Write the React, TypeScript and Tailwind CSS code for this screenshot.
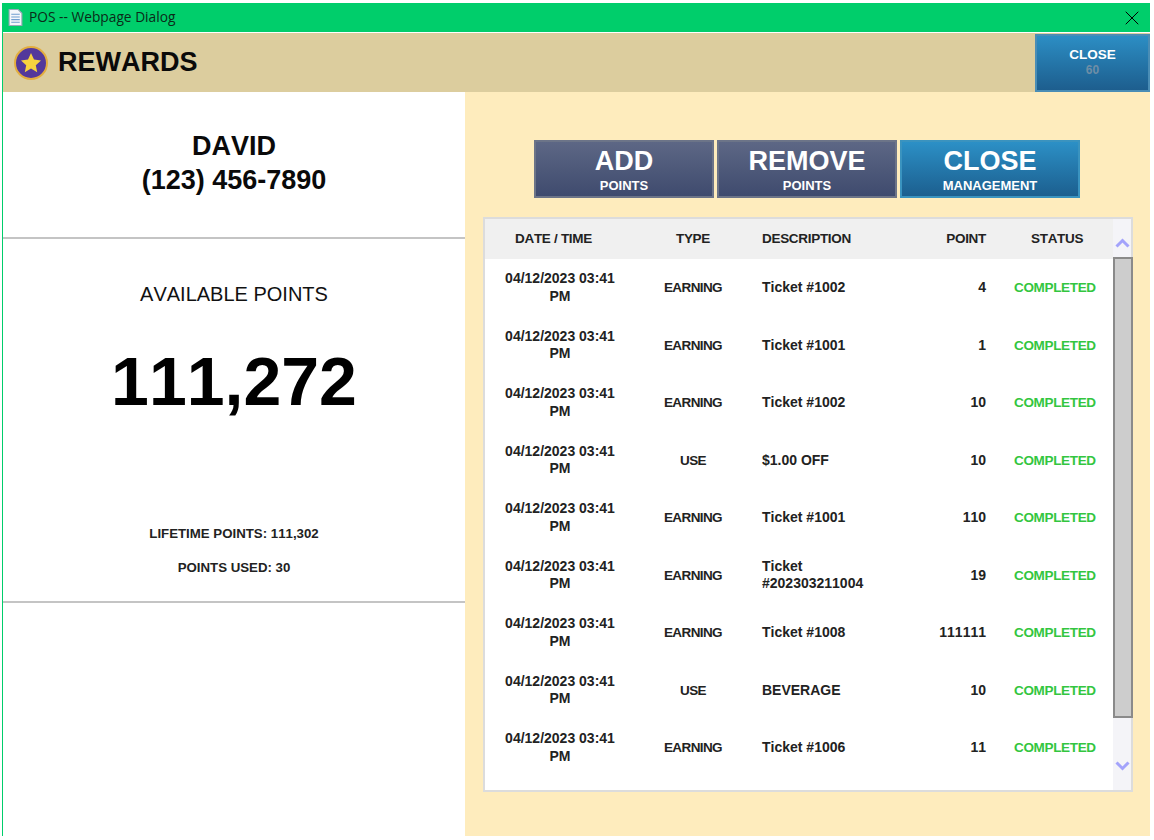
import React from 'react';
import { X } from 'lucide-react';

const rows = [
  { type: 'EARNING', desc: 'Ticket #1002', point: '4' },
  { type: 'EARNING', desc: 'Ticket #1001', point: '1' },
  { type: 'EARNING', desc: 'Ticket #1002', point: '10' },
  { type: 'USE', desc: '$1.00 OFF', point: '10' },
  { type: 'EARNING', desc: 'Ticket #1001', point: '110' },
  { type: 'EARNING', desc: 'Ticket #202303211004', point: '19' },
  { type: 'EARNING', desc: 'Ticket #1008', point: '111111' },
  { type: 'USE', desc: 'BEVERAGE', point: '10' },
  { type: 'EARNING', desc: 'Ticket #1006', point: '11' },
];

const slate = 'bg-gradient-to-b from-[#5d6785] to-[#3f4b6e] border-[#6c7488]';
const blue = 'bg-gradient-to-b from-[#2c90c6] to-[#1c5f8f] border-[#3a93bf]';

const ActionButton = ({ big, small, tone }: { big: string; small: string; tone: string }) => (
  <button className={`w-[180px] h-[58px] border-2 flex flex-col items-center text-white font-bold pt-[3px] ${tone}`}>
    <span className="text-[27px] leading-[32px]">{big}</span>
    <span className="text-[13px] leading-[17px]">{small}</span>
  </button>
);

export default function App() {
  return (
    <div className="w-[1154px] h-[840px] bg-white overflow-hidden pt-[3px] font-['Liberation_Sans',Arial,sans-serif] [font-kerning:none]">
      <div className="w-[1148px] ml-[2px] h-[833px] border-l border-[#00ce6b] flex flex-col">
        {/* title bar */}
        <div className="h-[29px] bg-[#00ce6b] flex items-center pl-[6px] pr-[6px] text-[13.75px] text-[#0b2a18] font-['Open_Sans',sans-serif] -ml-px shrink-0">
          <svg width="15" height="17" viewBox="0 0 14 16" className="mr-[6px]">
            <path d="M1 .5h8.5L13 4v11.5H1z" fill="#f4f7fb" stroke="#9aa8b8" />
            <path d="M3 5h8M3 7.5h8M3 10h8M3 12.5h8" stroke="#6f9fd0" />
          </svg>
          <span>POS -- Webpage Dialog</span>
          <X size={24} strokeWidth={1} className="ml-auto text-black" />
        </div>

        {/* header */}
        <div className="h-[59px] mt-px bg-[#dccd9e] flex items-center pl-[11px] shrink-0">
          <svg width="34" height="34" viewBox="0 0 34 34">
            <circle cx="17" cy="17" r="16" fill="#53389b" stroke="#e3ad3f" strokeWidth="2" />
            <path d="M17 7l3 6.6 7 .8-5.2 4.8 1.4 7L17 22.6l-6.2 3.6 1.4-7L7 14.4l7-.8z" fill="#f7d23e" />
          </svg>
          <h1 className="ml-[10px] text-[27px] font-bold text-[#0a0a0a]">REWARDS</h1>
          <button className="ml-auto w-[115px] h-[58px] border-2 border-[#4a8db5] flex flex-col items-center pt-[11px] font-bold bg-gradient-to-b from-[#2c8ec4] to-[#1d5e8e]">
            <span className="text-[13.5px] leading-[16px] text-white">CLOSE</span>
            <span className="text-[12px] leading-[14px] text-[#6f8ea6]">60</span>
          </button>
        </div>

        {/* body */}
        <div className="flex-1 flex min-h-0">
          {/* left panel */}
          <div className="w-[462px] bg-white flex flex-col text-center shrink-0">
            <div className="h-[147px] border-b-2 border-[#c4c4c4] pt-[37px] font-bold text-[#0a0a0a] text-[27px] leading-[34px]">
              <div>DAVID</div>
              <div>(123) 456-7890</div>
            </div>
            <div className="h-[364px] border-b-2 border-[#c4c4c4] flex flex-col items-center">
              <div className="mt-[43px] text-[20px] leading-[24px] text-[#111]">AVAILABLE POINTS</div>
              <div className="mt-[34px] text-[68px] leading-[82px] font-bold text-black">111,272</div>
              <div className="mt-[104px] text-[13.25px] leading-[16px] font-bold text-[#222]">LIFETIME POINTS: 111,302</div>
              <div className="mt-[18px] text-[13.25px] leading-[16px] font-bold text-[#222]">POINTS USED: 30</div>
            </div>
          </div>

          {/* right panel */}
          <div className="flex-1 bg-[#feecbd] pt-[48px] pl-[18px]">
            <div className="flex gap-[3px] ml-[51px]">
              <ActionButton big="ADD" small="POINTS" tone={slate} />
              <ActionButton big="REMOVE" small="POINTS" tone={slate} />
              <ActionButton big="CLOSE" small="MANAGEMENT" tone={blue} />
            </div>

            <div className="mt-[19px] w-[650px] h-[575px] border-2 border-r-0 border-[#dcdcdc] bg-white flex">
              <div className="flex-1 min-w-0">
                <div className="h-[40px] bg-[#f0f0f0] grid grid-cols-[150px_116px_135px_100px_1fr] items-center text-[13.5px] tracking-[-0.3px] font-bold text-[#222]">
                  <div className="text-center pr-[13px]">DATE / TIME</div>
                  <div className="text-center">TYPE</div>
                  <div className="pl-[11px]">DESCRIPTION</div>
                  <div className="text-right">POINT</div>
                  <div className="pl-[45px]">STATUS</div>
                </div>
                {rows.map((r, i) => (
                  <div key={i} className="h-[57.5px] grid grid-cols-[150px_116px_135px_100px_1fr] items-center text-[14px] leading-[17.5px] font-bold text-[#222]">
                    <div className="text-center">04/12/2023 03:41<br />PM</div>
                    <div className="text-center text-[13.5px] tracking-[-0.6px]">{r.type}</div>
                    <div className="pl-[11px]">{r.desc}</div>
                    <div className="text-right">{r.point}</div>
                    <div className="text-[#33c63f] pl-[28px] text-[13.5px] tracking-[-0.33px]">COMPLETED</div>
                  </div>
                ))}
              </div>
              <div className="w-[20px] bg-[#f4f4f8] flex flex-col shrink-0">
                <div className="h-[38px] border-r-2 border-[#dcdcdc] flex items-end justify-center pb-[9px]">
                  <svg width="15" height="10" viewBox="0 0 15 10"><path d="M1.5 8.5l6-6 6 6" fill="none" stroke="#a3a3fb" strokeWidth="3" /></svg>
                </div>
                <div className="h-[461px] bg-[#cdcdcd] border-2 border-[#8a8a8a] shrink-0" />
                <div className="flex-1 border-r-2 border-[#dcdcdc] flex items-start justify-center pt-[43px]">
                  <svg width="15" height="10" viewBox="0 0 15 10"><path d="M1.5 1.5l6 6 6-6" fill="none" stroke="#a3a3fb" strokeWidth="3" /></svg>
                </div>
              </div>
            </div>
          </div>
        </div>
      </div>
    </div>
  );
}
